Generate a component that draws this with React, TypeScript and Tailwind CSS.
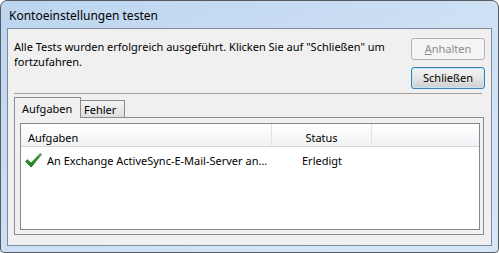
import React from "react";

const font = { fontFamily: '"Noto Sans", "Open Sans", sans-serif' };

function Check() {
  return (
    <svg width="17" height="15" viewBox="0 0 17 15" className="shrink-0">
      <defs>
        <linearGradient id="g" x1="0" y1="0" x2="0" y2="1">
          <stop offset="0" stopColor="#4cae3c" />
          <stop offset="1" stopColor="#1c7a1c" />
        </linearGradient>
      </defs>
      <path d="M0.5 8.5 L2.5 6.5 L6 10 L15.2 0.5 L16.5 1.6 L6.2 14.2 Z" fill="url(#g)" stroke="#16661a" strokeWidth="0.6" strokeLinejoin="round" />
    </svg>
  );
}

export default function App() {
  return (
    <div className="w-[499px] h-[253px] text-[11px] text-black leading-[14px]" style={font}>
      <div className="w-full h-full flex flex-col border border-[#565b63] rounded-t-[7px] rounded-b-[4px] bg-gradient-to-br from-[#bcd5ef] via-[#cde0f4] to-[#d6e7f7] overflow-hidden">
        <div className="h-[27px] shrink-0 pl-[8px] pt-[8px] text-[12px]">Kontoeinstellungen testen</div>
        <div className="mx-[6px] mb-[6px] flex-1 border border-[#7f8b9a] bg-[#f0f0f0] flex flex-col">
          <div className="flex pl-[6px] pr-[6px] pt-[9px]">
            <div className="flex-1 pt-[1px] leading-[15px] whitespace-nowrap">
              Alle Tests wurden erfolgreich ausgeführt. Klicken Sie auf "Schließen" um
              <br />
              fortzufahren.
            </div>
            <div className="flex flex-col gap-[7px] w-[74px]">
              <div className="h-[22px] border border-[#adb2b5] rounded-[3px] bg-[#f4f4f4] text-[#8d8d8d] flex items-center justify-center">
                <span><span className="underline">A</span>nhalten</span>
              </div>
              <div className="h-[22px] border border-[#3c7fb1] rounded-[3px] p-px bg-[#bfe7f7]">
                <div className="h-full rounded-[2px] bg-gradient-to-b from-[#f2f2f2] via-[#e6e6e6] to-[#d0d0d0] flex items-center justify-center">
                  Schließen
                </div>
              </div>
            </div>
          </div>
          <div className="ml-[6px] mr-[9px] mt-[4px] h-px bg-[#a0a0a0]" />
          <div className="ml-[6px] mr-[7px] mt-[3px] flex-1 mb-[10px] flex flex-col">
            <div className="flex h-[20px] shrink-0 items-end relative z-10">
              <div className="w-[67px] h-[21px] border border-b-0 border-[#898c95] bg-[#f0f0f0] pl-[7px] pt-[4px] -mb-px">
                Aufgaben
              </div>
              <div className="w-[44px] h-[17px] border border-l-0 border-b-0 border-[#898c95] bg-gradient-to-b from-[#f3f3f3] to-[#dfdfdf] pl-[3px] pt-[2px]">
                Fehler
              </div>
            </div>
            <div className="flex-1 border border-[#898c95] bg-[#f0f0f0] pt-[5px] pl-[5px] pr-[3px] pb-[4px] flex">
              <div className="flex-1 border border-[#828790] bg-white flex flex-col">
                <div className="h-[23px] shrink-0 flex border-b border-[#d5d5d5] bg-gradient-to-b from-white to-[#f1f2f4]">
                  <div className="w-[251px] pl-[7px] pt-[7px] border-r border-[#e2e3e5]">Aufgaben</div>
                  <div className="w-[100px] pt-[7px] text-center border-r border-[#e2e3e5]">Status</div>
                  <div className="flex-1" />
                </div>
                <div className="flex h-[24px] pt-[3px] items-center whitespace-nowrap">
                  <div className="w-[251px] flex items-center pl-[4px] gap-[5px]">
                    <Check />
                    <span>An Exchange ActiveSync-E-Mail-Server an...</span>
                  </div>
                  <div className="w-[100px] text-center">Erledigt</div>
                </div>
              </div>
            </div>
          </div>
        </div>
      </div>
    </div>
  );
}
